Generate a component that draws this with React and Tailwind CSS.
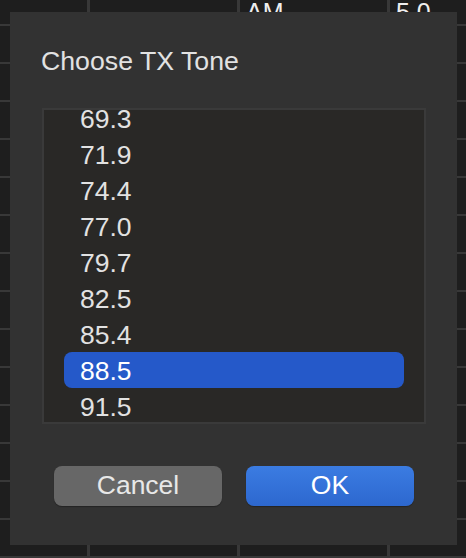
import React from 'react';

const TONES = ['67.0', '69.3', '71.9', '74.4', '77.0', '79.7', '82.5', '85.4', '88.5', '91.5', '94.8', '97.4'];
const SELECTED = '88.5';

// background table cells behind the sheet
const ROWS = Array.from({ length: 16 }, (_, r) => r);
const TOP_ROW = ['', '', 'AM', '5.0'];

const BackgroundTable = () => (
  <div className="grid h-[558px] grid-cols-[87px_147px_147px_76px] grid-rows-[24px_repeat(15,36px)] gap-[2px] gap-x-[3px] overflow-hidden bg-[#383838]">
    {ROWS.map((r) =>
      [0, 1, 2, 3].map((c) => (
        <div key={`${r}-${c}`} className="overflow-hidden bg-[#1e1e1e] pl-[6px] text-[25px] leading-[24px] text-[#eeeeee]">
          {r === 0 ? TOP_ROW[c] : ''}
        </div>
      ))
    )}
  </div>
);

const ToneList = () => (
  <div className="h-[316px] w-[384px] overflow-hidden border-2 border-[#3a3a3a] bg-[#292826]">
    <div className="-mt-[46px]">
      {TONES.map((t) => (
        <div
          key={t}
          className={`mx-[20px] h-[36px] rounded-[8px] pl-[16px] pt-[3px] text-[26.5px] leading-[33px] ${
            t === SELECTED ? 'bg-[#2559c9] text-white' : 'text-[#e2e2e2]'
          }`}
        >
          {t}
        </div>
      ))}
    </div>
  </div>
);

export default function App() {
  return (
    <div className="relative h-[558px] w-[466px] overflow-hidden bg-[#1e1e1e] font-['Liberation_Sans',Arial,sans-serif]">
      <BackgroundTable />

      {/* sheet */}
      <div className="absolute left-[10px] top-[12px] flex h-[533px] w-[447px] flex-col bg-[#323232]">
        <h2 className="ml-[31px] mt-[36px] text-[26.7px] leading-[26px] text-[#e2e2e2]">Choose TX Tone</h2>

        <div className="ml-[32px] mt-[34px]">
          <ToneList />
        </div>

        <div className="ml-[44px] mt-[42px] flex gap-[24px]">
          <button className="h-[40px] w-[168px] rounded-[8px] bg-[#676767] pb-[2px] text-[26.5px] leading-[38px] text-[#e8e8e8] shadow-[0_1px_1px_rgba(0,0,0,0.3)]">
            Cancel
          </button>
          <button className="h-[40px] w-[168px] rounded-[8px] bg-linear-to-b from-[#3b7ce2] to-[#2d68cf] pb-[2px] text-[26.5px] leading-[38px] text-white shadow-[0_1px_1px_rgba(0,0,0,0.3)]">
            OK
          </button>
        </div>
      </div>
    </div>
  );
}
